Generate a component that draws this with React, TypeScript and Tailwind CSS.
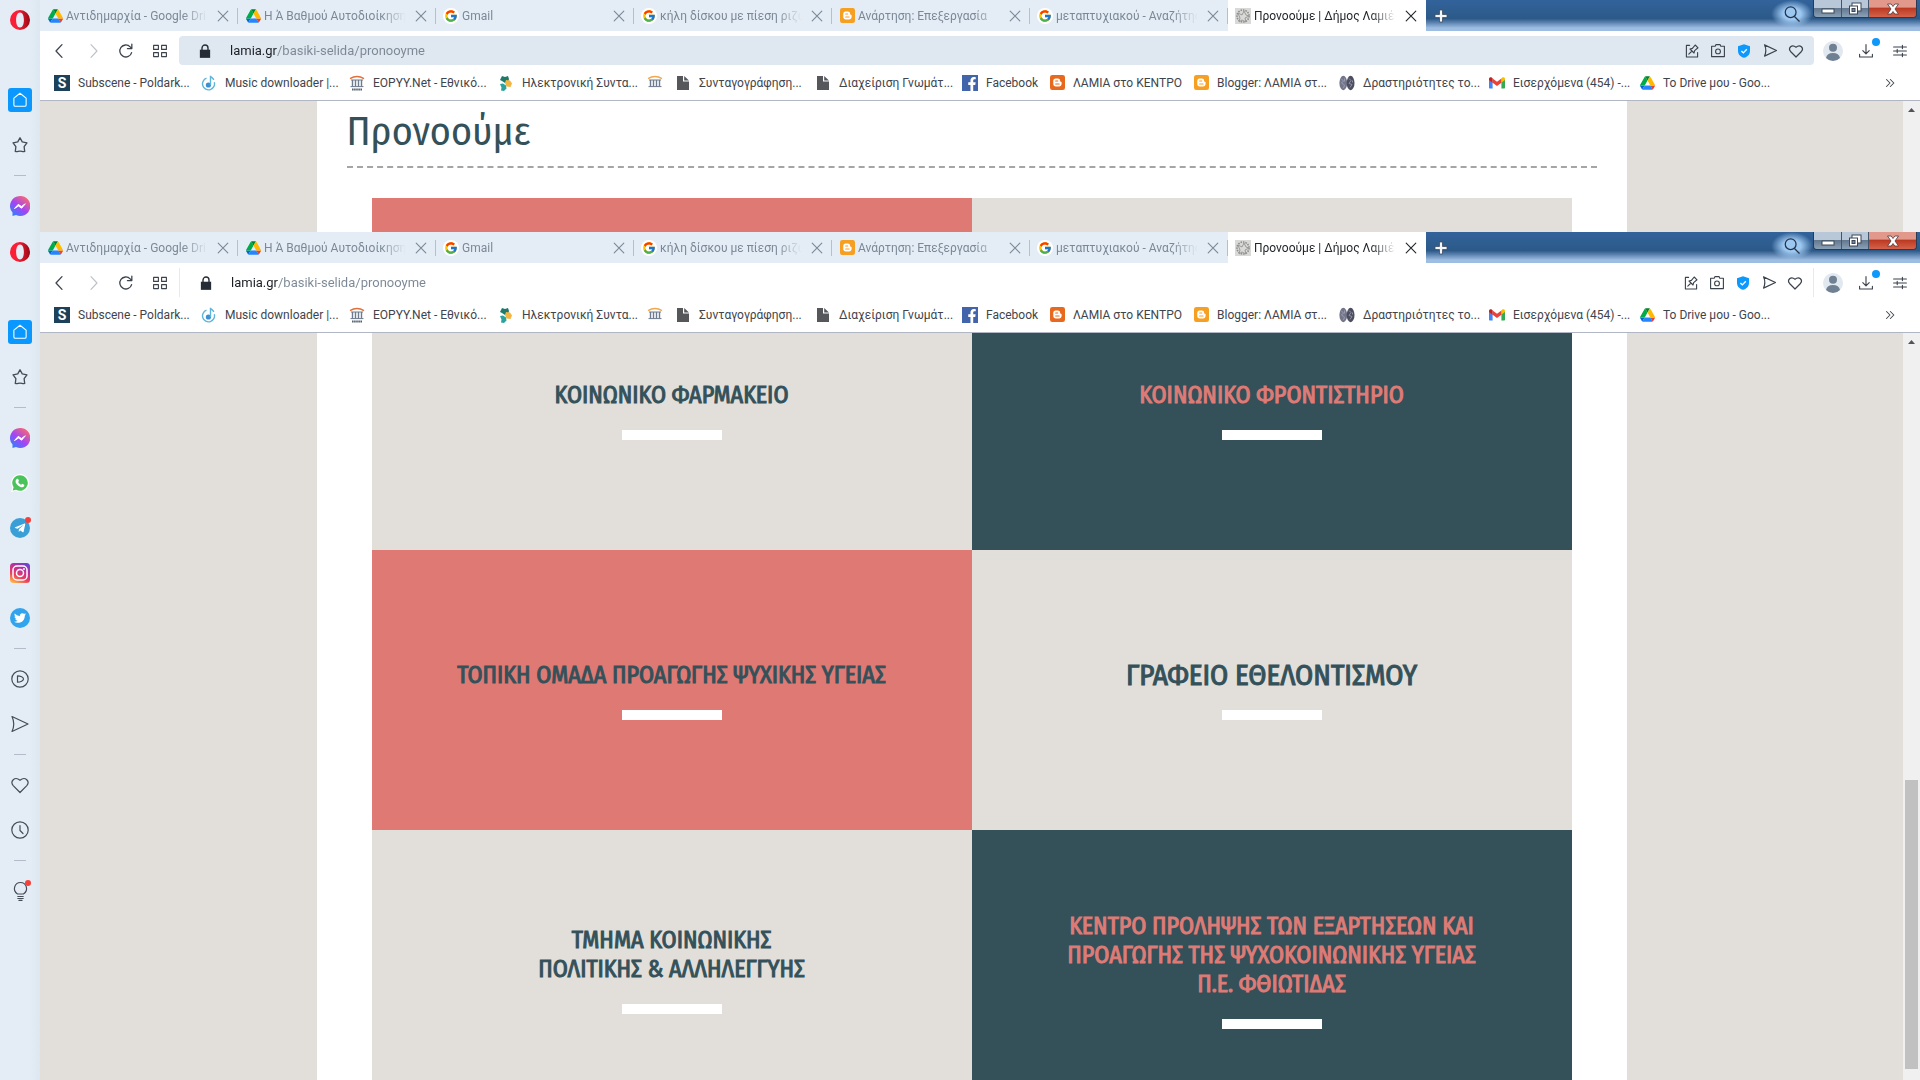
import type { ReactNode } from "react";
import { FaFacebookF, FaTelegramPlane, FaTwitter } from "react-icons/fa";
import { FcGoogle } from "react-icons/fc";

/* ---------- site icons ---------- */

function DriveIcon() {
  return (
    <svg viewBox="0 0 87 78" className="h-[14px] w-[15px]">
      <path d="M6.6 66.9l3.8 6.6c.8 1.4 2 2.5 3.3 3.3L27.5 53H0c0 1.5.4 3.1 1.2 4.5z" fill="#0066da" />
      <path d="M43.6 25L29.9 1.2c-1.3.8-2.5 1.9-3.3 3.3l-25.4 44A9 9 0 0 0 0 53h27.5z" fill="#00ac47" />
      <path d="M73.5 76.8c1.4-.8 2.5-1.9 3.3-3.3l1.6-2.8 7.7-13.2c.8-1.4 1.2-3 1.2-4.5H59.8l5.8 11.5z" fill="#ea4335" />
      <path d="M43.6 25L57.4 1.2C56 .4 54.5 0 52.9 0H34.4c-1.6 0-3.2.4-4.5 1.2z" fill="#00832d" />
      <path d="M59.8 53H27.5L13.8 76.8c1.3.8 2.9 1.2 4.5 1.2h50.8c1.6 0 3.1-.4 4.4-1.2z" fill="#2684fc" />
      <path d="M73.4 26.5L60.7 4.5c-.8-1.4-2-2.5-3.3-3.3L43.6 25l16.2 28h27.5c0-1.5-.4-3.1-1.2-4.5z" fill="#ffba00" />
    </svg>
  );
}

function GoogleIcon() {
  return (
    <span className="flex h-4 w-4 items-center justify-center rounded-full bg-white">
      <FcGoogle className="h-[14px] w-[14px]" />
    </span>
  );
}

function BloggerIcon({ color = "#f59f23" }: { color?: string }) {
  return (
    <svg viewBox="0 0 16 16" className="h-[15px] w-[15px]">
      <rect width="16" height="16" rx="2.5" fill={color} />
      <path
        d="M5.8 3.8h2.6c1.4 0 2.4 1 2.4 2.3 0 .9.3 1.1.9 1.2.5.1.7.3.7.9v1.2c0 1.6-1.1 2.8-2.8 2.8H6.2c-1.6 0-2.7-1.2-2.7-2.7V6.3c0-1.5 1-2.5 2.3-2.5z"
        fill="#fff"
      />
      <path d="M6.1 6.4h2.1M6.1 9.6h3.6" stroke={color} strokeWidth="1.3" strokeLinecap="round" />
    </svg>
  );
}

function SealIcon() {
  return (
    <svg viewBox="0 0 16 16" className="h-4 w-4">
      <rect width="16" height="16" fill="#d9d9d7" />
      <circle cx="8" cy="8" r="6" fill="none" stroke="#8d8d8b" strokeWidth="1.6" strokeDasharray="1.5 1" />
      <path d="M3 5l4 2 2-4 2 4 3 1-4 2 1 4-4-2-3 2 1-4z" fill="none" stroke="#9a9a98" />
    </svg>
  );
}

function SubsceneIcon() {
  return (
    <span className="flex h-4 w-4 items-center justify-center bg-[#1d4158] text-sm leading-none font-bold text-white">
      S
    </span>
  );
}

function MusicIcon() {
  return (
    <svg viewBox="0 0 16 16" className="h-4 w-4" fill="none" stroke="#5fb4da">
      <path d="M5.5 3.2a6 6 0 1 0 7.8 4" strokeWidth="1.4" />
      <circle cx="7.4" cy="10" r="2.6" fill="#3f8fd0" stroke="none" />
      <path d="M9.5 10V.8c.3 1.8 3 2 3.2 4.2" strokeWidth="1.4" />
    </svg>
  );
}

function TempleIcon({ caption = false }: { caption?: boolean }) {
  return (
    <svg viewBox="0 0 16 16" className="h-4 w-4" fill="none">
      <path d="M1 3.6Q8 -.6 15 3.6" stroke={caption ? "#e0703a" : "#f0a850"} strokeWidth="1.5" />
      <path d="M2 5h12M1.5 11.6h13" stroke="#6d7b8e" />
      <path d="M3.5 5v6.4M6.5 5v6.4M9.5 5v6.4M12.5 5v6.4" stroke="#6d7b8e" strokeWidth="1.4" />
      {caption && <path d="M3 14.5h10" stroke="#555f70" strokeWidth="2" strokeDasharray="1.6 .5" />}
    </svg>
  );
}

function PuzzleIcon() {
  return (
    <svg viewBox="0 0 16 16" className="h-4 w-4">
      <path d="M4 1l3 1 3-1 1 3-1 3-3 1-3-2-2-1z" fill="#1f7a6c" />
      <path d="M8 5l4 .5 2 3-1.500 3.500-4-.5L7 8z" fill="#f2b544" />
      <path d="M2 9l3-.5 3 2 .5 3L6 16l-3-.5.5-3z" fill="#29a39c" />
    </svg>
  );
}

function FileIcon() {
  return (
    <svg viewBox="0 0 16 16" className="h-4 w-4" fill="#55575b">
      <path d="M2 1h6v5.500h6V15H2z" />
      <path d="M9.200 1L14 5.400H9.200z" />
    </svg>
  );
}

function FacebookIcon() {
  return (
    <span className="flex h-4 w-4 items-end justify-end bg-[#4264aa]">
      <FaFacebookF className="h-[14px] w-3 text-white" />
    </span>
  );
}

function BrainIcon() {
  return (
    <svg viewBox="0 0 16 16" className="h-4 w-4">
      <ellipse cx="4.300" cy="8" rx="3.900" ry="7.200" fill="#73758a" />
      <ellipse cx="11.600" cy="8" rx="3.900" ry="7.200" fill="#4b4d60" />
      <path d="M2.500 4l2 2-2 2 3 2-1 3M5.500 3.500v3M10 3.500l2 2-2 3 3 1-2 3M13.500 5.500v2" stroke="#a2a4b4" fill="none" strokeWidth=".8" />
    </svg>
  );
}

function GmailIcon() {
  return (
    <svg viewBox="0 0 16 16" className="h-4 w-4">
      <path d="M0 4v8.500c0 .6.4 1 1 1h2.600V7z" fill="#4285f4" />
      <path d="M16 4v8.500c0 .6-.4 1-1 1h-2.600V7z" fill="#34a853" />
      <path d="M12.400 3.400V7.600L16 5V4c0-1.500-1.600-2.200-2.700-1.400z" fill="#fbbc04" />
      <path d="M3.600 3.400L8 6.700l4.400-3.300v4.300L8 11 3.600 7.700z" fill="#ea4335" />
      <path d="M0 4v1l3.600 2.700V3.400l-.9-.8C1.600 1.800 0 2.500 0 4z" fill="#c5221f" />
    </svg>
  );
}

/* ---------- line icons ---------- */

interface GlyphProps {
  d: string;
  className?: string;
  width?: number;
  children?: ReactNode;
}

function Glyph({ d, className = "h-5 w-5 text-[#454c57]", width = 1.2, children }: GlyphProps) {
  return (
    <svg
      viewBox="0 0 20 20"
      className={className}
      fill="none"
      stroke="currentColor"
      strokeWidth={width}
      strokeLinecap="round"
      strokeLinejoin="round"
    >
      <path d={d} />
      {children}
    </svg>
  );
}

const HEART = "M10 17.500L3.200 10.600C-.2 6.600 4.500 .8 10 5.200 15.500 .8 20.200 6.600 16.800 10.600z";
const PLANE = "M2 2.500L18 10 2 17.500Q5.500 10 2 2.500z";
const CROSS = "M4 4l12 12M16 4L4 16";

/* ---------- data ---------- */

const TABS = [
  { title: "Αντιδημαρχία - Google Dri", icon: <DriveIcon /> },
  { title: "Η Ά Βαθμού Αυτοδιοίκηση", icon: <DriveIcon /> },
  { title: "Gmail", icon: <GoogleIcon /> },
  { title: "κήλη δίσκου με πίεση ριζώ", icon: <GoogleIcon /> },
  { title: "Ανάρτηση: Επεξεργασία", icon: <BloggerIcon /> },
  { title: "μεταπτυχιακού - Αναζήτησ", icon: <GoogleIcon /> },
  { title: "Προνοούμε | Δήμος Λαμιέ", icon: <SealIcon />, active: true },
];

const BOOKMARKS = [
  { label: "Subscene - Poldark...", icon: <SubsceneIcon />, width: "w-[147px]" },
  { label: "Music downloader |...", icon: <MusicIcon />, width: "w-[148px]" },
  { label: "EOPYY.Net - Εθνικό...", icon: <TempleIcon caption />, width: "w-[149px]" },
  { label: "Ηλεκτρονική Συντα...", icon: <PuzzleIcon />, width: "w-[149px]" },
  { label: "", icon: <TempleIcon />, width: "w-[28px]" },
  { label: "Συνταγογράφηση...", icon: <FileIcon />, width: "w-[140px]" },
  { label: "Διαχείριση Γνωμάτ...", icon: <FileIcon />, width: "w-[147px]" },
  { label: "Facebook", icon: <FacebookIcon />, width: "w-[87px]" },
  { label: "ΛΑΜΙΑ στο ΚΕΝΤΡΟ", icon: <BloggerIcon color="#e8691d" />, width: "w-[144px]" },
  { label: "Blogger: ΛΑΜΙΑ στ...", icon: <BloggerIcon />, width: "w-[146px]" },
  { label: "Δραστηριότητες το...", icon: <BrainIcon />, width: "w-[150px]" },
  { label: "Εισερχόμενα (454) -...", icon: <GmailIcon />, width: "w-[150px]" },
  { label: "Το Drive μου - Goo...", icon: <DriveIcon />, width: "w-[150px]" },
];

/* ---------- sidebar ---------- */

function SideItem({ label, badge, children }: { label: string; badge?: boolean; children: ReactNode }) {
  return (
    <button aria-label={label} className="flex h-[45px] w-10 shrink-0 items-center justify-center">
      <span className="relative flex">
        {children}
        {badge && <span className="absolute -top-px -right-px h-1.5 w-1.5 rounded-full bg-[#f5403a]" />}
      </span>
    </button>
  );
}

function SideDivider() {
  return (
    <div className="flex h-4 shrink-0 items-center justify-center">
      <div className="h-px w-3 bg-[#b3bcc8]" />
    </div>
  );
}

function Sidebar() {
  return (
    <nav className="flex w-10 shrink-0 flex-col overflow-hidden bg-gradient-to-r from-[#e4edf5] from-75% to-[#dce7f1]">
      <button aria-label="Opera" className="mb-[37px] flex h-10 shrink-0 items-center justify-center">
        <svg viewBox="0 0 20 20" className="h-5 w-5">
          <defs>
            <linearGradient id="opera" x1="0" x2="1">
              <stop offset=".4" stopColor="#fa1e37" />
              <stop offset="1" stopColor="#960a16" />
            </linearGradient>
          </defs>
          <path
            fillRule="evenodd"
            fill="url(#opera)"
            d="M10 0a10 10 0 1 0 0 20 10 10 0 0 0 0-20zM10 2.500c2.600 0 3.900 3.500 3.900 7.500s-1.300 7.500-3.900 7.500S6.100 14 6.100 10 7.400 2.500 10 2.500z"
          />
        </svg>
      </button>
      <SideItem label="Home">
        <span className="flex h-6 w-6 items-center justify-center rounded-[3px] bg-[#0a98ff]">
          <Glyph d="M10 2.500L3.200 8V15.500Q3.200 17 4.700 17H15.300Q16.800 17 16.800 15.500V8z" className="h-[18px] w-[18px] text-white" />
        </span>
      </SideItem>
      <SideItem label="Bookmarks">
        <Glyph
          d="M10 2l2.500 4.600 5.200 1-3.100 4.300.6 5.300c-2.200.7-3-.4-5.200-.4s-3 1.100-5.200.4l.6-5.300L2.300 7.600l5.200-1z"
          className="h-[18px] w-[18px] text-[#454c57]"
          width={1.5}
        />
      </SideItem>
      <SideDivider />
      <SideItem label="Messenger">
        <svg viewBox="0 0 20 20" className="h-5 w-5">
          <defs>
            <linearGradient id="messenger" x1="0" y1="1" x2=".8" y2="0">
              <stop offset="0" stopColor="#1a8cff" />
              <stop offset=".5" stopColor="#a145f5" />
              <stop offset="1" stopColor="#ff6a6a" />
            </linearGradient>
          </defs>
          <path d="M10 0a10 10 0 1 1-4 19L2.500 20V16.500A10 10 0 0 1 10 0z" fill="url(#messenger)" />
          <path d="M4.500 12.500L8.300 8.300l3 2.200 4-2.700-3.700 4.400-3-2.200z" fill="#fff" stroke="#fff" />
        </svg>
      </SideItem>
      <SideItem label="WhatsApp">
        <svg viewBox="0 0 20 20" className="h-5 w-5">
          <path d="M10 1a9 9 0 1 1-4.400 16.800L1 19l1.300-4.500A9 9 0 0 1 10 1z" fill="#fff" />
          <path d="M10 2.200a7.800 7.800 0 1 1-4 14.500L2.700 17.500l.9-3.200A7.800 7.800 0 0 1 10 2.200z" fill="#4bc35b" />
          <path
            d="M7.300 5.800c.5-.1.8 0 1 .5l.6 1.500c.1.400-.7 1-.7 1.300.6 1.300 1.500 2.100 2.900 2.700.4 0 .9-1.100 1.300-1l1.700.9c.4.200.2 1.100 0 1.500-.7 1.200-2.300 1.300-4.100.5-1.900-.8-3.300-2.300-4.200-4-.6-1.600 0-3.400 1.500-3.900z"
            fill="#fff"
          />
        </svg>
      </SideItem>
      <SideItem label="Telegram" badge>
        <span className="flex h-5 w-5 items-center justify-center rounded-full bg-[#3a9fd6]">
          <FaTelegramPlane className="h-3 w-3 text-white" />
        </span>
      </SideItem>
      <SideItem label="Instagram">
        <svg viewBox="0 0 20 20" className="h-5 w-5" fill="none" stroke="#fff">
          <defs>
            <linearGradient id="insta" x1=".2" y1="1" x2=".7" y2="0">
              <stop offset="0" stopColor="#fdb44b" />
              <stop offset=".35" stopColor="#ea3f60" />
              <stop offset=".75" stopColor="#b52fa4" />
              <stop offset="1" stopColor="#6a45d0" />
            </linearGradient>
          </defs>
          <rect width="20" height="20" rx="3.500" fill="url(#insta)" stroke="none" />
          <rect x="3" y="3" width="14" height="14" rx="4" strokeWidth="1.500" />
          <circle cx="10" cy="10" r="3.500" strokeWidth="1.500" />
          <circle cx="14" cy="6" r=".6" />
        </svg>
      </SideItem>
      <SideItem label="Twitter">
        <span className="flex h-5 w-5 items-center justify-center rounded-full bg-[#32a4ee]">
          <FaTwitter className="h-3 w-3 text-white" />
        </span>
      </SideItem>
      <SideDivider />
      <SideItem label="Player">
        <Glyph d="M7.500 6.800v6.400c3 0 6-1.600 6-3.200s-3-3.200-6-3.200z">
          <circle cx="10" cy="10" r="8.200" />
        </Glyph>
      </SideItem>
      <SideItem label="My Flow">
        <Glyph d={PLANE} />
      </SideItem>
      <SideDivider />
      <SideItem label="Favourites">
        <Glyph d={HEART} />
      </SideItem>
      <SideItem label="History">
        <Glyph d="M10 5.500v5l3 3">
          <circle cx="10" cy="10" r="8.200" />
        </Glyph>
      </SideItem>
      <SideDivider />
      <SideItem label="Tips" badge>
        <Glyph d="M7.500 13C2 9.500 4.500 1.500 10.500 1.500S19 9.500 13.500 13zM7.800 15.500h5.400M7.800 17.500h5.400M9 19.400h3" />
      </SideItem>
    </nav>
  );
}

/* ---------- browser chrome ---------- */

function TabStrip() {
  return (
    <div className="flex h-[31px] bg-[#e4edf5]">
      {TABS.map((tab) => (
        <div
          key={tab.title}
          className={
            tab.active
              ? "flex w-[198px] shrink-0 items-center bg-white pl-[7px] text-[#22262b]"
              : "flex w-[198px] shrink-0 items-center pl-[7px] text-[#7b8897]"
          }
        >
          <button className="flex min-w-0 flex-1 items-center gap-[3px]">
            <span className="flex w-4 shrink-0 justify-center">{tab.icon}</span>
            <span className="flex-1 overflow-hidden text-left text-xs whitespace-nowrap [mask-image:linear-gradient(to_right,black_82%,transparent)]">
              {tab.title}
            </span>
          </button>
          <button aria-label="Close tab" className="flex w-[29px] justify-center">
            <Glyph d={CROSS} className="h-4 w-4" width={1.4} />
          </button>
          <div className={tab.active ? "w-px" : "h-4 w-px bg-[#b5c0cd]"} />
        </div>
      ))}
      <div className="flex min-w-0 flex-1 items-start bg-gradient-to-b from-[#32639b] via-[#2c5988] via-60% to-[#9dbde2] to-90%">
        <button aria-label="New tab" className="flex h-[31px] w-[30px] items-center justify-center">
          <svg viewBox="0 0 14 14" className="h-[14px] w-[14px]">
            <path d="M5.500 1h3v4.500H13v3H8.500V13h-3V8.500H1v-3h4.500z" fill="#f4f6f8" stroke="#3d4f66" strokeWidth=".8" />
          </svg>
        </button>
        <button
          aria-label="Search tabs"
          className="ml-auto flex h-7 w-[42px] items-center justify-center bg-radial from-[#9cc7f0] from-30% to-transparent to-70%"
        >
          <Glyph d="M13 13l5 5" className="h-[18px] w-[18px] text-[#24344a]" width={1.4}>
            <circle cx="8.500" cy="8" r="6" />
          </Glyph>
        </button>
        <div className="mr-[3px] flex h-[18px] w-[104px] overflow-hidden rounded-b border border-t-0 border-[#2b3c52] text-white">
          <button
            aria-label="Minimize"
            className="flex w-7 items-center justify-center border-r border-[#44566c] bg-gradient-to-b from-[#b9c8d8] from-45% via-[#64798f] via-50% to-[#8ba1b7]"
          >
            <svg viewBox="0 0 14 14" className="h-[14px] w-[14px]">
              <rect x="1" y="7" width="12" height="4" fill="#fff" stroke="#3b4756" />
            </svg>
          </button>
          <button
            aria-label="Restore"
            className="flex w-[27px] items-center justify-center border-r border-[#44566c] bg-gradient-to-b from-[#b9c8d8] from-45% via-[#64798f] via-50% to-[#8ba1b7]"
          >
            <svg viewBox="0 0 14 14" className="h-[14px] w-[14px]" fill="#fff" stroke="#3b4756">
              <rect x="4" y="1" width="9" height="8" />
              <rect x="1.500" y="4" width="8" height="8" />
              <rect x="4" y="6.500" width="3" height="3" fill="#7488a0" />
            </svg>
          </button>
          <button
            aria-label="Close"
            className="flex flex-1 items-center justify-center bg-gradient-to-b from-[#e2998b] from-40% via-[#bd3a22] via-50% to-[#d5624a]"
          >
            <svg viewBox="0 0 14 14" className="h-[14px] w-[14px]">
              <path d="M1.500 2h3.700L7 4.500 8.800 2h3.700L9 7l3.500 5H8.800L7 9.500 5.200 12H1.500L5 7z" fill="#fff" stroke="#50393a" strokeWidth=".8" />
            </svg>
          </button>
        </div>
      </div>
    </div>
  );
}

function ToolButton({ label, width = "w-[26px]", children }: { label: string; width?: string; children: ReactNode }) {
  return (
    <button aria-label={label} className={`flex h-[29px] shrink-0 items-center justify-center ${width}`}>
      {children}
    </button>
  );
}

function Toolbar({ filled }: { filled?: boolean }) {
  const small = "h-4 w-4 text-[#3b424c]";
  return (
    <div className="flex h-[39px] items-center bg-white pl-[3px]">
      <ToolButton label="Back" width="w-[33px]">
        <Glyph d="M12.500 2L5 10l7.500 8" className={small} width={1.6} />
      </ToolButton>
      <ToolButton label="Forward" width="w-[33px]">
        <Glyph d="M7.500 2l7.500 8-7.500 8" className="h-4 w-4 text-[#bcc1c8]" width={1.4} />
      </ToolButton>
      <ToolButton label="Reload" width="w-[34px]">
        <Glyph d="M17 12a7.500 7.500 0 1 1-1.800-7.200L17 6.800M17.300 1.500v5.500h-5.500" className={small} width={1.6} />
      </ToolButton>
      <ToolButton label="Speed Dial" width="w-[33px]">
        <Glyph d="M2 3h6v5H2zM12 3h6v5h-6zM2 12h6v5H2zM12 12h6v5h-6z" className={small} width={1.4} />
      </ToolButton>
      <div
        className={
          filled
            ? "ml-[3px] flex h-[29px] min-w-0 flex-1 items-center rounded-sm bg-[#dfe7f0]"
            : "ml-[3px] flex h-[29px] min-w-0 flex-1 items-center border-x border-[#e6eaef]"
        }
      >
        <svg viewBox="0 0 14 16" className="ml-5 h-[14px] w-3">
          <path d="M1 6.500h12V16H1z" fill="#262c35" />
          <path d="M3.500 7V4.500a3.500 3.500 0 0 1 7 0V7" fill="none" stroke="#262c35" strokeWidth="1.600" />
        </svg>
        <input
          type="text"
          aria-label="Address"
          readOnly
          value="lamia.gr/basiki-selida/pronooyme"
          className="ml-[19px] min-w-0 flex-1 bg-[linear-gradient(to_right,#1b1f25_47px,#7b8794_47px)] bg-clip-text text-[13px] text-transparent outline-none"
        />
        <ToolButton label="Pin">
          <Glyph d="M7 3H3v14.500h14V12M6 14l4-4M7.500 7.500l5 5 .8-3L17.500 6 14 2.500 10.500 6.700z" className={small} width={1.4} />
        </ToolButton>
        <ToolButton label="Snapshot">
          <Glyph d="M6.500 4l1-2h5l1 2H18v13H2V4z" className={small} width={1.4}>
            <circle cx="10" cy="10.500" r="3" />
          </Glyph>
        </ToolButton>
        <ToolButton label="Ad blocker">
          <svg viewBox="0 0 14 16" className="h-[14px] w-3">
            <path d="M7 0l7 2.500V8c0 4.500-3.500 7-7 8-3.500-1-7-3.500-7-8V2.500z" fill="#0d98fb" />
            <path d="M4 8l2.200 2.200L10.300 6" stroke="#fff" strokeWidth="1.600" fill="none" />
          </svg>
        </ToolButton>
        <ToolButton label="Send to My Flow">
          <Glyph d={PLANE} className="h-[15px] w-[15px] text-[#3b424c]" width={1.5} />
        </ToolButton>
        <ToolButton label="Add to bookmarks">
          <Glyph d={HEART} className={small} width={1.5} />
        </ToolButton>
        <div className="w-[5px]" />
      </div>
      <ToolButton label="Profile" width="w-[38px]">
        <svg viewBox="0 0 20 20" className="h-5 w-5">
          <circle cx="10" cy="10" r="10" fill="#e2e8ef" />
          <circle cx="10" cy="6.700" r="4" fill="#6f8093" />
          <path d="M3 17q1-5 7-5t7 5q-3 3-7 3t-7-3z" fill="#6f8093" />
        </svg>
      </ToolButton>
      <ToolButton label="Downloads" width="w-[27px]">
        <span className="relative flex">
          <Glyph d="M10 2v11M6 9.500l4 4 4-4M2 14v3.500h16V14" className={small} width={1.4} />
          <span className="absolute -top-[5px] -right-1.5 h-2 w-2 rounded-full bg-[#0d98fb]" />
        </span>
      </ToolButton>
      <ToolButton label="Easy setup" width="w-[41px]">
        <Glyph d="M2 5h16M2 10h16M2 15h16M13 3v4M6.500 8v4M13 13v4" className={small} width={1.4} />
      </ToolButton>
    </div>
  );
}

function BookmarksBar() {
  return (
    <div className="flex h-[31px] items-center border-b border-[#b1b6c5] bg-white pb-[5px] pl-[14px] text-xs text-[#3f444c]">
      {BOOKMARKS.map((bookmark, i) => (
        <a key={i} href="#" className={`flex shrink-0 items-center gap-2 whitespace-nowrap ${bookmark.width}`}>
          <span className="flex w-4 shrink-0 justify-center">{bookmark.icon}</span>
          {bookmark.label}
        </a>
      ))}
      <button aria-label="More bookmarks" className="mr-[23px] ml-auto">
        <Glyph d="M5 5l5 5-5 5M10.500 5l5 5-5 5" className="h-[14px] w-[14px]" width={1.5} />
      </button>
    </div>
  );
}

function Scrollbar({ thumb }: { thumb?: boolean }) {
  return (
    <div className="flex w-[17px] shrink-0 flex-col items-center bg-[#f0f0f0]">
      <svg viewBox="0 0 17 17" className="h-[17px] w-[17px] shrink-0">
        <path d="M5 11l3.500-4L12 11z" fill="#50545a" />
      </svg>
      {thumb && <div className="mt-auto mb-[11px] h-[289px] w-[13px] shrink-0 bg-[#c1c1c1]" />}
    </div>
  );
}

interface BrowserWindowProps {
  size: string;
  filled?: boolean;
  thumb?: boolean;
  children: ReactNode;
}

function BrowserWindow({ size, filled, thumb, children }: BrowserWindowProps) {
  return (
    <div className={`flex overflow-hidden ${size}`}>
      <Sidebar />
      <div className="flex min-w-0 flex-1 flex-col">
        <TabStrip />
        <Toolbar filled={filled} />
        <BookmarksBar />
        <div className="flex min-h-0 flex-1">
          <main className="min-w-0 flex-1 overflow-hidden bg-[#e2dfda]">{children}</main>
          <Scrollbar thumb={thumb} />
        </div>
      </div>
    </div>
  );
}

/* ---------- page ---------- */

interface TileProps {
  lines: string[];
  tone: string;
  large?: boolean;
}

function Tile({ lines, tone, large }: TileProps) {
  return (
    <a href="#" className={`flex h-[280px] flex-col items-center justify-center gap-5 text-center ${tone}`}>
      <h2 className={`leading-[29px] font-normal [-webkit-text-stroke:1px] ${large ? "text-[29px]" : "text-2xl"}`}>
        {lines.map((line) => (
          <span key={line} className="block">
            {line}
          </span>
        ))}
      </h2>
      <div className="h-2.5 w-[100px] bg-white" />
    </a>
  );
}

const SAND = "bg-[#e2dfda] text-[#34515a]";
const TEAL = "bg-[#345059] text-[#df7b76]";
const CORAL = "bg-[#df7973] text-[#34515a]";

export default function App() {
  return (
    <div className="flex h-screen flex-col overflow-hidden bg-white font-['Segoe_UI','Selawik',Roboto,'Noto_Sans',sans-serif]">
      <BrowserWindow size="h-[232px] shrink-0" filled>
        <div className="mx-auto max-w-[1310px] bg-white font-['Fira_Sans_Condensed',Roboto,sans-serif]">
          <div className="px-[30px]">
            <h1 className="border-b-2 border-dashed border-[#a5a5a5] pt-2 pb-2.5 text-[40px] leading-[47px] text-[#34515a]">
              Προνοούμε
            </h1>
          </div>
          <div className="mx-auto mt-[30px] grid max-w-[1200px] grid-cols-2">
            <div className="h-[280px] bg-[#df7973]" />
            <div className="h-[280px] bg-[#e2dfda]" />
          </div>
        </div>
      </BrowserWindow>
      <BrowserWindow size="min-h-0 flex-1" thumb>
        <div className="mx-auto max-w-[1310px] bg-white font-['Fira_Sans_Condensed',Roboto,sans-serif]">
          {/* scrolled part-way into the first row */}
          <div className="mx-auto -mt-[63px] grid max-w-[1200px] grid-cols-2">
            <Tile lines={["ΚΟΙΝΩΝΙΚΟ ΦΑΡΜΑΚΕΙΟ"]} tone={SAND} />
            <Tile lines={["ΚΟΙΝΩΝΙΚΟ ΦΡΟΝΤΙΣΤΗΡΙΟ"]} tone={TEAL} />
            <Tile lines={["ΤΟΠΙΚΗ ΟΜΑΔΑ ΠΡΟΑΓΩΓΗΣ ΨΥΧΙΚΗΣ ΥΓΕΙΑΣ"]} tone={CORAL} />
            <Tile lines={["ΓΡΑΦΕΙΟ ΕΘΕΛΟΝΤΙΣΜΟΥ"]} tone={SAND} large />
            <Tile lines={["ΤΜΗΜΑ ΚΟΙΝΩΝΙΚΗΣ", "ΠΟΛΙΤΙΚΗΣ & ΑΛΛΗΛΕΓΓΥΗΣ"]} tone={SAND} />
            <Tile
              lines={["ΚΕΝΤΡΟ ΠΡΟΛΗΨΗΣ ΤΩΝ ΕΞΑΡΤΗΣΕΩΝ ΚΑΙ", "ΠΡΟΑΓΩΓΗΣ ΤΗΣ ΨΥΧΟΚΟΙΝΩΝΙΚΗΣ ΥΓΕΙΑΣ", "Π.Ε. ΦΘΙΩΤΙΔΑΣ"]}
              tone={TEAL}
            />
          </div>
        </div>
      </BrowserWindow>
    </div>
  );
}
